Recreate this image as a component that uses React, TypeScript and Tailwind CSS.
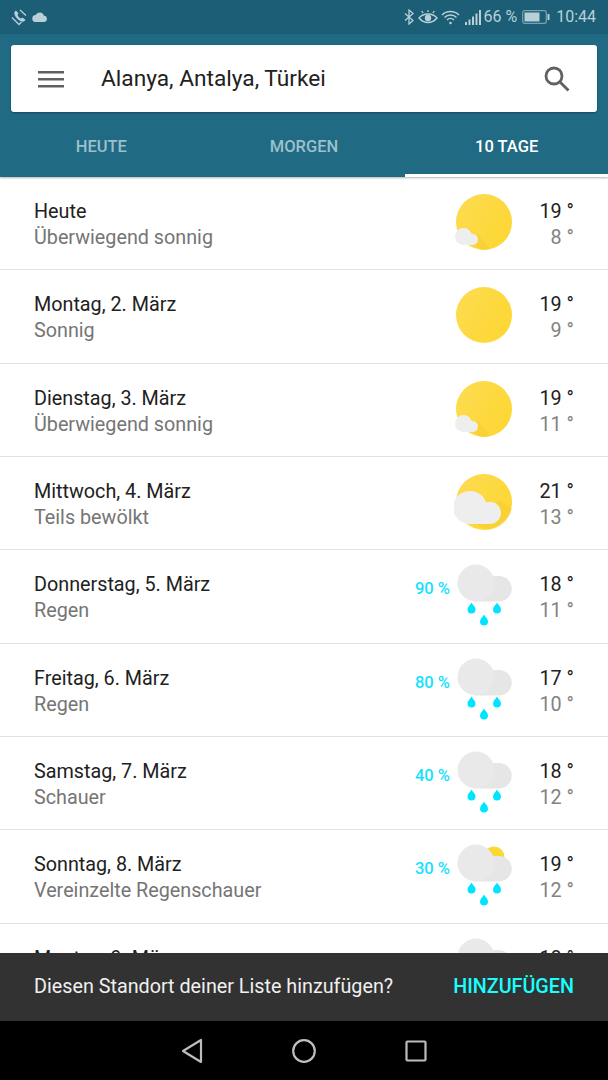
const days = [
  { title: 'Heute', sub: 'Überwiegend sonnig', hi: '19 °', lo: '8 °', icon: 'sunSmallCloud' },
  { title: 'Montag, 2. März', sub: 'Sonnig', hi: '19 °', lo: '9 °', icon: 'sun' },
  { title: 'Dienstag, 3. März', sub: 'Überwiegend sonnig', hi: '19 °', lo: '11 °', icon: 'sunSmallCloud' },
  { title: 'Mittwoch, 4. März', sub: 'Teils bewölkt', hi: '21 °', lo: '13 °', icon: 'sunBigCloud' },
  { title: 'Donnerstag, 5. März', sub: 'Regen', hi: '18 °', lo: '11 °', icon: 'rain', chance: '90 %' },
  { title: 'Freitag, 6. März', sub: 'Regen', hi: '17 °', lo: '10 °', icon: 'rain', chance: '80 %' },
  { title: 'Samstag, 7. März', sub: 'Schauer', hi: '18 °', lo: '12 °', icon: 'rain', chance: '40 %' },
  { title: 'Sonntag, 8. März', sub: 'Vereinzelte Regenschauer', hi: '19 °', lo: '12 °', icon: 'sunRain', chance: '30 %' },
  { title: 'Montag, 9. März', sub: '', hi: '18 °', lo: '', icon: 'rain' },
];

function Drop({ x, y }: { x: number; y: number }) {
  return (
    <path
      d={`M${x} ${y - 6.5}c1 2.2 4 4.2 4 7a4 4 0 0 1-8 0c0-2.8 3-4.8 4-7z`}
      fill="#00e5ff"
    />
  );
}

function WeatherIcon({ type }: { type: string }) {
  const hasSun = type.startsWith('sun') && type !== 'sunRain';
  const isRain = type === 'rain' || type === 'sunRain';
  return (
    <svg width="60" height="72" viewBox="0 0 60 72" className="shrink-0">
      <defs>
        <linearGradient id="sunFill" x1="0" y1="0" x2="1" y2="0.6">
          <stop offset="0" stopColor="#fddc52" />
          <stop offset="1" stopColor="#fdd735" />
        </linearGradient>
      </defs>
      {hasSun && <circle cx="30" cy="36" r="28" fill="url(#sunFill)" />}
      {type === 'sunSmallCloud' && (
        <>
          <path d="M14 56l10-8 12 15a28 28 0 0 1-9 1z" fill="#f6c92c" opacity="0.45" />
          <circle cx="9.500" cy="50.500" r="8.500" fill="#eeeeee" />
          <rect x="9.500" y="48" width="14.500" height="11" rx="5.500" fill="#eeeeee" />
        </>
      )}
      {type === 'sunBigCloud' && (
        <>
          <path d="M20 58l26-24 12 9a28 28 0 0 1-24 21z" fill="#f6c92c" opacity="0.45" />
          <path
            d="M14 58C6 57-1 50-1 41.500-1 32 6.500 25 16 25c7.500 0 13.500 4 16 11.500 1.500-.5 3-.5 4.500-.5C42.500 36 47 41 47 47 47 53 42 58 36 58z"
            fill="#eeeeee"
          />
        </>
      )}
      {isRain && (
        <>
          {type === 'sunRain' && <circle cx="40" cy="18" r="10.500" fill="#fdd835" />}
          <path d="M26 17h19a12.500 12.500 0 0 1 0 25.500H26z" fill="#e6e6e6" />
          <circle cx="22" cy="24" r="18.500" fill="#e9e9e9" />
          <path d="M20 42.500h8v-1h-8z" fill="#e9e9e9" />
          <Drop x={17.5} y={50} />
          <Drop x={43} y={50} />
          <Drop x={30} y={62} />
        </>
      )}
    </svg>
  );
}

function DayRow({ day }: { day: (typeof days)[number] }) {
  return (
    <div className="flex h-[93.33px] shrink-0 border-b-[1.500px] border-[#e2e2e2] pr-[34px] pl-[34px]">
      <div className="min-w-0 flex-1 pt-[22px] text-[19.750px] leading-[26px]">
        <div className="text-[#212121]">{day.title}</div>
        <div className="text-[#757575]">{day.sub}</div>
      </div>
      {day.chance && (
        <div className="mt-[29px] mr-1 h-5 text-[16.500px] leading-5 font-medium text-[#18e0ff]">
          {day.chance}
        </div>
      )}
      <div className="mt-[9px]">
        <WeatherIcon type={day.icon} />
      </div>
      <div className="w-[60px] shrink-0 pt-[22px] text-right text-[19.750px] leading-[26px]">
        <div className="text-[#212121]">{day.hi}</div>
        <div className="text-[#828282]">{day.lo}</div>
      </div>
    </div>
  );
}

function StatusBar() {
  return (
    <div className="flex h-[34px] items-center bg-[#1b5e75] pr-3 pl-[11px] text-[#b9d0d9]">
      <svg width="18" height="18" viewBox="0 0 18 18" fill="none" stroke="currentColor" strokeWidth="1.300">
        <path d="M1 9.500L8 16.500 10.500 14" />
        <path d="M5 2.500c-1.500 1-2 2.500-1.500 4 1 3 4 6 7 7 1.500.5 3 0 4-1.500l-3-2.500-1.500 1c-1.500-.5-3-2-3.500-3.500l1-1.500z" fill="currentColor" stroke="none" />
        <path d="M9 2l6 5.500" />
      </svg>
      <svg width="16" height="10" viewBox="0 0 16 10" className="ml-[3px]" fill="currentColor">
        <path d="M4 10a3.500 3.500 0 0 1-.4-7A4.500 4.500 0 0 1 12 3.700 3.200 3.200 0 0 1 12.500 10z" />
      </svg>
      <div className="ml-auto flex items-center">
        <svg width="10" height="16" viewBox="0 0 10 16" fill="none" stroke="currentColor" strokeWidth="1.300">
          <path d="M1 4.500l8 7-4 3.500V1l4 3.500-8 7" />
        </svg>
        <svg width="20" height="14" viewBox="0 0 20 14" className="ml-[4px]" fill="none" stroke="currentColor" strokeWidth="1.400">
          <path d="M1 8c2.500-3 5.500-4 9-4s6.500 1 9 4c-2.500 3-5.500 4.500-9 4.500S3.500 11 1 8z" />
          <circle cx="10" cy="8" r="2.500" fill="currentColor" />
          <path d="M5 3L3.800 1M10 2V.3M15 3l1.200-2" />
        </svg>
        <svg width="19" height="15" viewBox="0 0 19 15" className="ml-[3px]" fill="none" stroke="currentColor" strokeWidth="1.400">
          <path d="M1 5a12 12 0 0 1 17 0M3.500 7.500a8.500 8.500 0 0 1 12 0M6 10a5 5 0 0 1 7 0" />
          <circle cx="9.500" cy="13" r="1.300" fill="currentColor" stroke="none" />
        </svg>
        <svg width="16" height="15" viewBox="0 0 16 15" className="ml-[5px]" fill="currentColor">
          <rect x="0" y="12" width="2" height="3" />
          <rect x="3.500" y="9.500" width="2" height="5.500" />
          <rect x="7" y="6.500" width="2" height="8.500" />
          <rect x="10.500" y="3.500" width="2" height="11.500" />
          <rect x="14" y="0" width="2" height="15" />
        </svg>
        <span className="ml-[2px] text-[16px] leading-none">66 %</span>
        <svg width="28" height="14" viewBox="0 0 28 14" className="ml-[5px]">
          <rect x="0.700" y="0.700" width="23.600" height="12.600" rx="2" fill="none" stroke="currentColor" strokeWidth="1.200" opacity="0.6" />
          <rect x="2.500" y="2.500" width="15" height="9" fill="currentColor" />
          <rect x="25.500" y="4" width="2" height="6" fill="currentColor" />
        </svg>
        <span className="ml-[6px] text-[16px] leading-none">10:44</span>
      </div>
    </div>
  );
}

export default function App() {
  return (
    <div className="flex h-[1080px] w-[608px] flex-col overflow-hidden bg-white font-['Roboto',sans-serif]">
      <StatusBar />

      {/* Search + tabs */}
      <div className="flex h-[143px] shrink-0 flex-col bg-[#206a84] shadow-[0_1px_2px_rgba(0,0,0,0.3)]">
        <div className="mx-[11px] mt-[11px] flex h-[67px] items-center rounded-[3px] bg-white pr-[27px] pl-[27px] shadow-[0_1px_2px_rgba(0,0,0,0.3)]">
          <svg width="26" height="20" viewBox="0 0 26 20" fill="#616161">
            <rect y="2" width="26" height="2.500" />
            <rect y="9" width="26" height="2.500" />
            <rect y="16" width="26" height="2.500" />
          </svg>
          <span className="ml-[37px] flex-1 pt-[2px] text-[22.700px] text-[#212121]">Alanya, Antalya, Türkei</span>
          <svg width="26" height="26" viewBox="0 0 26 26" fill="none" stroke="#616161" strokeWidth="2.800">
            <circle cx="10" cy="10" r="8" />
            <path d="M16 16l8.500 8.500" />
          </svg>
        </div>
        <div className="mt-[11px] flex flex-1 text-center text-[16.500px] font-medium">
          <div className="flex-1 pt-[12px] text-[#9cc0cc]">HEUTE</div>
          <div className="flex-1 pt-[12px] text-[#9cc0cc]">MORGEN</div>
          <div className="flex-1 border-b-[3px] border-white pt-[12px] text-white">10 TAGE</div>
        </div>
      </div>

      {/* Forecast list */}
      <div className="flex min-h-0 flex-1 flex-col overflow-hidden">
        {days.map((day) => (
          <DayRow key={day.title} day={day} />
        ))}
      </div>

      {/* Snackbar */}
      <div className="flex h-[68px] shrink-0 items-center justify-between bg-[#323232] pr-[34px] pl-[34px] text-[19.750px]">
        <span className="text-[#f0f0f0]">Diesen Standort deiner Liste hinzufügen?</span>
        <span className="font-medium text-[#18ffff]">HINZUFÜGEN</span>
      </div>

      {/* Nav bar */}
      <div className="flex h-[59px] shrink-0 items-center justify-center gap-[89px] bg-black">
        <svg width="22" height="26" viewBox="0 0 22 26" fill="none" stroke="#bdbdbd" strokeWidth="2.200" strokeLinejoin="round">
          <path d="M20 2v22L2 13z" />
        </svg>
        <svg width="24" height="24" viewBox="0 0 24 24" fill="none" stroke="#bdbdbd" strokeWidth="2.200">
          <circle cx="12" cy="12" r="10.800" />
        </svg>
        <svg width="22" height="22" viewBox="0 0 22 22" fill="none" stroke="#bdbdbd" strokeWidth="2.200" strokeLinejoin="round">
          <rect x="1.500" y="1.500" width="19" height="19" rx="1" />
        </svg>
      </div>
    </div>
  );
}
